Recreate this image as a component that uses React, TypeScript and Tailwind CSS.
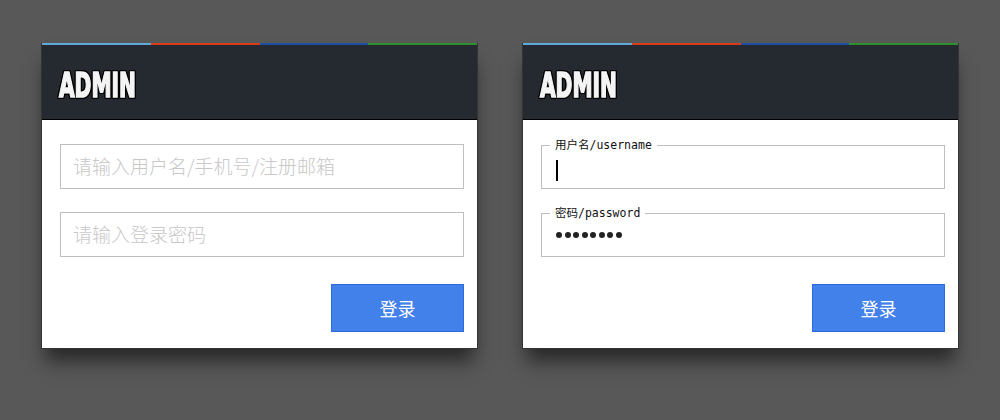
import React from 'react'

const Stripe = () => (
  <div className="flex h-[2px]">
    <div className="flex-1 bg-[#5fa8d8]" />
    <div className="flex-1 bg-[#d83a1a]" />
    <div className="flex-1 bg-[#1d4fa0]" />
    <div className="flex-1 bg-[#2e8f2e]" />
  </div>
)

const Header = () => (
  <div className="h-[75px] bg-[#252a31] border-b border-black pl-[17px] pt-[23px]">
    <span
      className="inline-block origin-left scale-x-[0.66] text-[34px] leading-none font-bold text-[#f4f4f4] [-webkit-text-stroke:1.6px_#f4f4f4] [filter:drop-shadow(1px_0_0_#000)_drop-shadow(-1px_0_0_#000)_drop-shadow(0_1px_0_#000)_drop-shadow(0_-1px_0_#000)]"
      style={{ fontFamily: '"DejaVu Sans Condensed", "DejaVu Sans", sans-serif' }}
    >
      ADMIN
    </span>
  </div>
)

const LoginButton = () => (
  <div className="flex justify-end mr-[13px] mt-[27px]">
    <button className="w-[133px] h-[48px] bg-[#4280ea] border border-[#2a6be0] text-white text-[18px] font-['Noto_Sans_CJK_SC',sans-serif]">
      登录
    </button>
  </div>
)

const Card: React.FC<{ children: React.ReactNode }> = ({ children }) => (
  <div className="w-[437px] bg-white border-x border-b border-[#333] shadow-[0_16px_18px_-4px_rgba(0,0,0,0.55)]">
    <Stripe />
    <Header />
    <div className="pt-[24px] pb-[16px]">{children}</div>
  </div>
)

const PlainInput: React.FC<{ placeholder: string; className?: string }> = ({ placeholder, className }) => (
  <div
    className={
      'ml-[18px] mr-[13px] h-[45px] border border-[#bfbfbf] flex items-center pl-[12px] text-[19px] font-light text-[#c8c8c8] font-["Noto_Sans_CJK_SC",sans-serif] ' +
      (className ?? '')
    }
  >
    {placeholder}
  </div>
)

const FieldInput: React.FC<{ label: string; children: React.ReactNode; className?: string }> = ({
  label,
  children,
  className,
}) => (
  <fieldset
    className={'ml-[18px] mr-[13px] h-[50px] border border-[#bfbfbf] px-[8px] -mt-[5px] ' + (className ?? '')}
  >
    <legend
      className="px-[5px] text-[11.5px] leading-[12px] text-[#111]"
      style={{ fontFamily: '"DejaVu Sans Mono", "Noto Sans CJK SC", monospace' }}
    >
      {label}
    </legend>
    {children}
  </fieldset>
)

export default function App() {
  return (
    <div className="w-[1000px] h-[420px] bg-[#585858] flex items-start gap-[44px] pl-[41px] pt-[43px]">
      <Card>
        <PlainInput placeholder="请输入用户名/手机号/注册邮箱" />
        <PlainInput placeholder="请输入登录密码" className="mt-[23px]" />
        <LoginButton />
      </Card>
      <Card>
        <FieldInput label="用户名/username">
          <div className="ml-[6px] mt-[9px] w-[2px] h-[21px] bg-black" />
        </FieldInput>
        <FieldInput label="密码/password" className="mt-[18px]">
          <div className="ml-[6px] mt-[13px] flex gap-[2.5px]">
            {[0, 1, 2, 3, 4, 5, 7, 8].map((i) => (
              <span key={i} className="w-[6px] h-[6px] rounded-full bg-[#222]" />
            ))}
          </div>
        </FieldInput>
        <LoginButton />
      </Card>
    </div>
  )
}
